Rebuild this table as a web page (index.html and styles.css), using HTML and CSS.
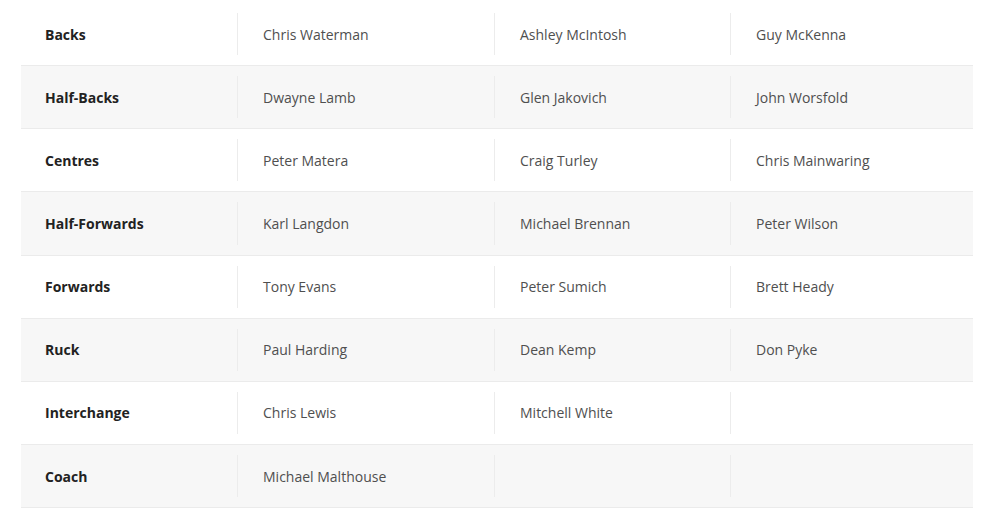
FILE: index.html
```html
<!DOCTYPE html>
<html>
<head>
<meta charset="utf-8">
<link rel="stylesheet" href="styles.css">
</head>
<body>
<div class="wrap">
<table class="team">
<colgroup><col class="c1"><col class="c2"><col class="c3"><col class="c4"></colgroup>
<tbody>
<tr><th><div class="cell">Backs</div></th><td><div class="cell">Chris Waterman</div></td><td><div class="cell">Ashley McIntosh</div></td><td><div class="cell">Guy McKenna</div></td></tr>
<tr><th><div class="cell">Half-Backs</div></th><td><div class="cell">Dwayne Lamb</div></td><td><div class="cell">Glen Jakovich</div></td><td><div class="cell">John Worsfold</div></td></tr>
<tr><th><div class="cell">Centres</div></th><td><div class="cell">Peter Matera</div></td><td><div class="cell">Craig Turley</div></td><td><div class="cell">Chris Mainwaring</div></td></tr>
<tr><th><div class="cell">Half-Forwards</div></th><td><div class="cell">Karl Langdon</div></td><td><div class="cell">Michael Brennan</div></td><td><div class="cell">Peter Wilson</div></td></tr>
<tr><th><div class="cell">Forwards</div></th><td><div class="cell">Tony Evans</div></td><td><div class="cell">Peter Sumich</div></td><td><div class="cell">Brett Heady</div></td></tr>
<tr><th><div class="cell">Ruck</div></th><td><div class="cell">Paul Harding</div></td><td><div class="cell">Dean Kemp</div></td><td><div class="cell">Don Pyke</div></td></tr>
<tr><th><div class="cell">Interchange</div></th><td><div class="cell">Chris Lewis</div></td><td><div class="cell">Mitchell White</div></td><td><div class="cell"></div></td></tr>
<tr><th><div class="cell">Coach</div></th><td><div class="cell">Michael Malthouse</div></td><td><div class="cell"></div></td><td><div class="cell"></div></td></tr>
</tbody>
</table>
</div>
</body>
</html>
```
FILE: styles.css
```css
html, body {
  margin: 0;
  padding: 0;
  background: #fff;
}
body {
  font-family: "Open Sans", "Noto Sans", sans-serif;
}
.wrap {
  padding: 3px 16px 0 21px;
}
.team {
  width: 952px;
  border-collapse: collapse;
  table-layout: fixed;
}
.c1 { width: 216px; }
.c2 { width: 257px; }
.c3 { width: 236px; }
.c4 { width: 243px; }
.team tr {
  border-bottom: 1px solid #ebebeb;
}
.team tr:nth-child(even) {
  background: #f7f7f7;
}
.team th, .team td {
  padding: 10px 0;
  text-align: left;
  vertical-align: middle;
}
.cell {
  height: 42.15px;
  display: flex;
  align-items: center;
  padding: 0 25px;
  border-left: 1px solid #ececec;
  font-size: 14px;
  color: #4f4f4f;
  white-space: nowrap;
}
.team th .cell {
  border-left: none;
  padding-left: 24px;
  font-weight: 700;
  color: #222;
}
```
